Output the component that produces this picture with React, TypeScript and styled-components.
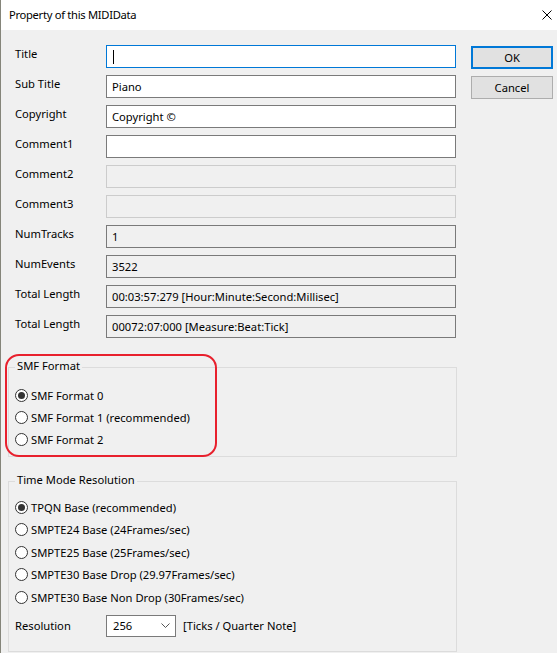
import * as React from "react";
import styled, { createGlobalStyle } from "styled-components";

const GlobalStyle = createGlobalStyle`
  html, body {
    margin: 0;
    padding: 0;
    background: #f0f0f0;
  }
  * {
    box-sizing: border-box;
  }
`;

const FONT = `"Noto Sans", "Segoe UI", sans-serif`;

const Window = styled.div`
  width: 557px;
  height: 653px;
  background: #f0f0f0;
  border-left: 1px solid #85857a;
  font-family: ${FONT};
  font-size: 11.2px;
  color: #000;
  overflow: hidden;
  display: flex;
  flex-direction: column;
`;

const TitleBar = styled.div`
  height: 30px;
  flex: none;
  background: #fff;
  display: flex;
  align-items: center;
  justify-content: space-between;
  padding: 0 5px 0 8px;
`;

const TitleText = styled.span`
  line-height: 16px;
  letter-spacing: -0.3px;
`;

const CloseBox = styled.div`
  width: 10px;
  height: 10px;
  display: flex;
`;

const Body = styled.div`
  padding: 15px 0 0 7px;
  display: flex;
  flex-direction: column;
`;

const TopSection = styled.div`
  display: flex;
  padding-left: 7px;
`;

const Fields = styled.div`
  display: grid;
  grid-template-columns: 91px 350px;
  grid-auto-rows: 23px;
  row-gap: 7px;
`;

const Label = styled.div`
  line-height: 16px;
  padding-top: 1px;
  white-space: nowrap;
`;

type BoxKind = "edit" | "focus" | "disabled" | "readonly";

const boxBorder: Record<BoxKind, string> = {
  edit: "#7a7a7a",
  focus: "#0078d7",
  disabled: "#cccccc",
  readonly: "#7a7a7a",
};

const boxBg: Record<BoxKind, string> = {
  edit: "#ffffff",
  focus: "#ffffff",
  disabled: "#f0f0f0",
  readonly: "#f0f0f0",
};

const TextBox = styled.div<{ $kind: BoxKind }>`
  height: 23px;
  border: 1px solid ${(p) => boxBorder[p.$kind]};
  background: ${(p) => boxBg[p.$kind]};
  padding: 0 5px;
  display: flex;
  align-items: center;
  white-space: nowrap;
  overflow: hidden;
`;

const Caret = styled.span`
  display: inline-block;
  width: 1px;
  height: 14px;
  background: #000;
  margin-left: 1px;
`;

const Buttons = styled.div`
  display: flex;
  flex-direction: column;
  gap: 7px;
  margin-left: 15px;
  margin-top: 1px;
`;

const Button = styled.div<{ $default?: boolean }>`
  width: 82px;
  height: 23px;
  background: #e1e1e1;
  border: ${(p) => (p.$default ? "2px solid #0078d7" : "1px solid #adadad")};
  display: flex;
  align-items: center;
  justify-content: center;
`;

const GroupWrap = styled.div<{ $top: number }>`
  position: relative;
  margin-top: ${(p) => p.$top}px;
  width: 449px;
`;

const Group = styled.div<{ $padTop: number; $padBottom: number }>`
  border: 1px solid #dcdcdc;
  padding: ${(p) => p.$padTop}px 6px ${(p) => p.$padBottom}px 6px;
  display: flex;
  flex-direction: column;
`;

const GroupTitle = styled.div`
  position: absolute;
  top: -9px;
  left: 7px;
  padding: 0 2px;
  background: #f0f0f0;
  line-height: 16px;
`;

const RadioRow = styled.div<{ $h: number }>`
  height: ${(p) => p.$h}px;
  display: flex;
  align-items: center;
  white-space: nowrap;
`;

const RadioCircle = styled.span<{ $on?: boolean }>`
  width: 13px;
  height: 13px;
  border-radius: 50%;
  border: 1px solid #333;
  background: #fff;
  margin-right: 3px;
  flex: none;
  display: flex;
  align-items: center;
  justify-content: center;
  &::after {
    content: "";
    display: ${(p) => (p.$on ? "block" : "none")};
    width: 7px;
    height: 7px;
    border-radius: 50%;
    background: #333;
  }
`;

const ResRow = styled.div`
  display: flex;
  align-items: center;
  height: 22px;
  margin-top: 6px;
`;

const ResLabel = styled.div`
  width: 91px;
`;

const Select = styled.div`
  width: 70px;
  height: 22px;
  border: 1px solid #7a7a7a;
  background: #fff;
  display: flex;
  align-items: center;
  justify-content: space-between;
  padding: 0 5px 0 6px;
  margin-right: 7px;
`;

const Highlight = styled.div`
  position: absolute;
  top: -13px;
  left: -3px;
  width: 212px;
  height: 103px;
  border: 2px solid #e8202d;
  border-radius: 14px;
  pointer-events: none;
`;

const fields: { label: string; kind: BoxKind; value?: string; caret?: boolean }[] = [
  { label: "Title", kind: "focus", caret: true },
  { label: "Sub Title", kind: "edit", value: "Piano" },
  { label: "Copyright", kind: "edit", value: "Copyright ©" },
  { label: "Comment1", kind: "edit" },
  { label: "Comment2", kind: "disabled" },
  { label: "Comment3", kind: "disabled" },
  { label: "NumTracks", kind: "readonly", value: "1" },
  { label: "NumEvents", kind: "readonly", value: "3522" },
  { label: "Total Length", kind: "readonly", value: "00:03:57:279 [Hour:Minute:Second:Millisec]" },
  { label: "Total Length", kind: "readonly", value: "00072:07:000 [Measure:Beat:Tick]" },
];

const smfFormats = ["SMF Format 0", "SMF Format 1 (recommended)", "SMF Format 2"];

const timeModes = [
  "TPQN Base (recommended)",
  "SMPTE24 Base (24Frames/sec)",
  "SMPTE25 Base (25Frames/sec)",
  "SMPTE30 Base Drop (29.97Frames/sec)",
  "SMPTE30 Base Non Drop (30Frames/sec)",
];

const App = () => {
  return (
    <>
      <GlobalStyle />
      <Window>
        <TitleBar>
          <TitleText>Property of this MIDIData</TitleText>
          <CloseBox>
            <svg width="10" height="10" viewBox="0 0 10 10">
              <path d="M0.5 0.5 L9.5 9.5 M9.5 0.5 L0.5 9.5" stroke="#000" strokeWidth="1" fill="none" />
            </svg>
          </CloseBox>
        </TitleBar>
        <Body>
          <TopSection>
            <Fields>
              {fields.map((f, i) => (
                <React.Fragment key={i}>
                  <Label>{f.label}</Label>
                  <TextBox $kind={f.kind}>
                    {f.caret ? <Caret /> : f.value}
                  </TextBox>
                </React.Fragment>
              ))}
            </Fields>
            <Buttons>
              <Button $default>OK</Button>
              <Button>Cancel</Button>
            </Buttons>
          </TopSection>

          <GroupWrap $top={29}>
            <Group $padTop={16} $padBottom={6}>
              {smfFormats.map((s, i) => (
                <RadioRow key={s} $h={22}>
                  <RadioCircle $on={i === 0} />
                  {s}
                </RadioRow>
              ))}
            </Group>
            <GroupTitle>SMF Format</GroupTitle>
            <Highlight />
          </GroupWrap>

          <GroupWrap $top={24}>
            <Group $padTop={14} $padBottom={14}>
              {timeModes.map((s, i) => (
                <RadioRow key={s} $h={22.5}>
                  <RadioCircle $on={i === 0} />
                  {s}
                </RadioRow>
              ))}
              <ResRow>
                <ResLabel>Resolution</ResLabel>
                <Select>
                  <span>256</span>
                  <svg width="9" height="5" viewBox="0 0 9 5">
                    <path d="M0.5 0.5 L4.5 4.5 L8.5 0.5" stroke="#555" strokeWidth="1" fill="none" />
                  </svg>
                </Select>
                <span>[Ticks / Quarter Note]</span>
              </ResRow>
            </Group>
            <GroupTitle>Time Mode Resolution</GroupTitle>
          </GroupWrap>
        </Body>
      </Window>
    </>
  );
};

export default App;
